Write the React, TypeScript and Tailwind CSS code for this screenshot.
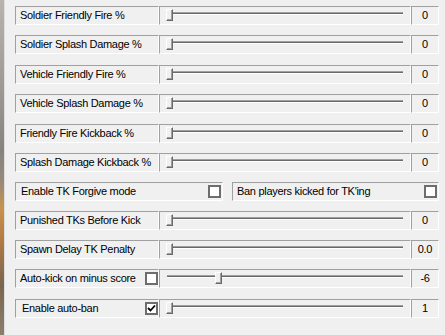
import React from "react";

type SliderRow = {
  label: string;
  value: string;
  thumb: number;
  check?: boolean;
  mt: string;
};

const sunken =
  "border border-t-[#a0a0a0] border-l-[#a0a0a0] border-b-white border-r-white";

const CheckBox = ({ checked }: { checked: boolean }) => (
  <div className="flex h-[13px] w-[13px] shrink-0 items-center justify-center border-2 border-[#6d6d6d] bg-white">
    {checked && (
      <svg width="9" height="9" viewBox="0 0 9 9">
        <path d="M1 4 L3.5 6.5 L8 1.5" stroke="#000" strokeWidth="1.8" fill="none" />
      </svg>
    )}
  </div>
);

const Slider = ({ thumb }: { thumb: number }) => (
  <div className={`relative h-[19px] w-[252px] ${sunken}`}>
    <div className="absolute left-[7px] right-[7px] top-[5px] h-[3px] border-t border-b border-t-[#a0a0a0] border-b-white bg-[#696969]" />
    <div
      className="absolute top-[2px] h-[12px] w-[7px] border-l border-t border-b border-r border-l-white border-t-white border-r-[#696969] border-b-[#696969] bg-[#f0f0f0] shadow-[inset_-1px_-1px_0_#a0a0a0]"
      style={{ left: thumb }}
    />
  </div>
);

const rows: SliderRow[] = [
  { label: "Soldier Friendly Fire %", value: "0", thumb: 6, mt: "mt-0" },
  { label: "Soldier Splash Damage %", value: "0", thumb: 6, mt: "mt-[10px]" },
  { label: "Vehicle Friendly Fire %", value: "0", thumb: 6, mt: "mt-[11px]" },
  { label: "Vehicle Splash Damage %", value: "0", thumb: 6, mt: "mt-[10px]" },
  { label: "Friendly Fire Kickback %", value: "0", thumb: 6, mt: "mt-[11px]" },
  { label: "Splash Damage Kickback %", value: "0", thumb: 6, mt: "mt-[10px]" },
];

const rows2: SliderRow[] = [
  { label: "Punished TKs Before Kick", value: "0", thumb: 6, mt: "mt-[10px]" },
  { label: "Spawn Delay TK Penalty", value: "0.0", thumb: 6, mt: "mt-[10px]" },
  { label: "Auto-kick on minus score", value: "-6", thumb: 55, check: false, mt: "mt-[10px]" },
  { label: "Enable auto-ban", value: "1", thumb: 6, check: true, mt: "mt-[11px]" },
];

const Row = ({ r }: { r: SliderRow }) => (
  <div className={`flex h-[19px] ${r.mt}`}>
    <div className={`flex h-[19px] w-[144px] items-center justify-between pl-[4px] ${sunken}`}>
      <span className={`whitespace-nowrap ${r.label === "Enable auto-ban" ? "pl-[2px]" : ""}`}>{r.label}</span>
      {r.check !== undefined && <CheckBox checked={r.check} />}
    </div>
    <Slider thumb={r.thumb} />
    <div className={`flex h-[19px] w-[28px] items-center justify-center ${sunken}`}>{r.value}</div>
  </div>
);

export default function App() {
  return (
    <div
      className="flex h-[335px] w-[445px] overflow-hidden bg-[#f0f0f0] text-[11px] leading-none tracking-[-0.3px] text-black"
      style={{ fontFamily: '"Liberation Sans", Arial, sans-serif' }}
    >
      <div className="w-[4px] shrink-0 bg-[linear-gradient(to_bottom,#b9b3ad_0%,#a09a94_25%,#85837f_45%,#9a8a78_55%,#c8924f_62%,#b07a44_72%,#7a6650_85%,#8c7d6c_100%)]" />
      <div className="w-px shrink-0 bg-[#dedede]" />
      <div className="flex flex-col pl-[10px] pt-[6px]">
        {rows.map((r) => (
          <Row key={r.label} r={r} />
        ))}
        <div className="mt-[10px] flex h-[19px]">
          <div className={`flex h-[19px] w-[208px] items-center justify-between pl-[5px] pr-px ${sunken}`}>
            <span className="whitespace-nowrap">Enable TK Forgive mode</span>
            <CheckBox checked={false} />
          </div>
          <div className={`ml-[9px] flex h-[19px] w-[207px] items-center justify-between pl-[4px] pr-px ${sunken}`}>
            <span className="whitespace-nowrap">Ban players kicked for TK'ing</span>
            <CheckBox checked={false} />
          </div>
        </div>
        {rows2.map((r) => (
          <Row key={r.label} r={r} />
        ))}
      </div>
    </div>
  );
}
